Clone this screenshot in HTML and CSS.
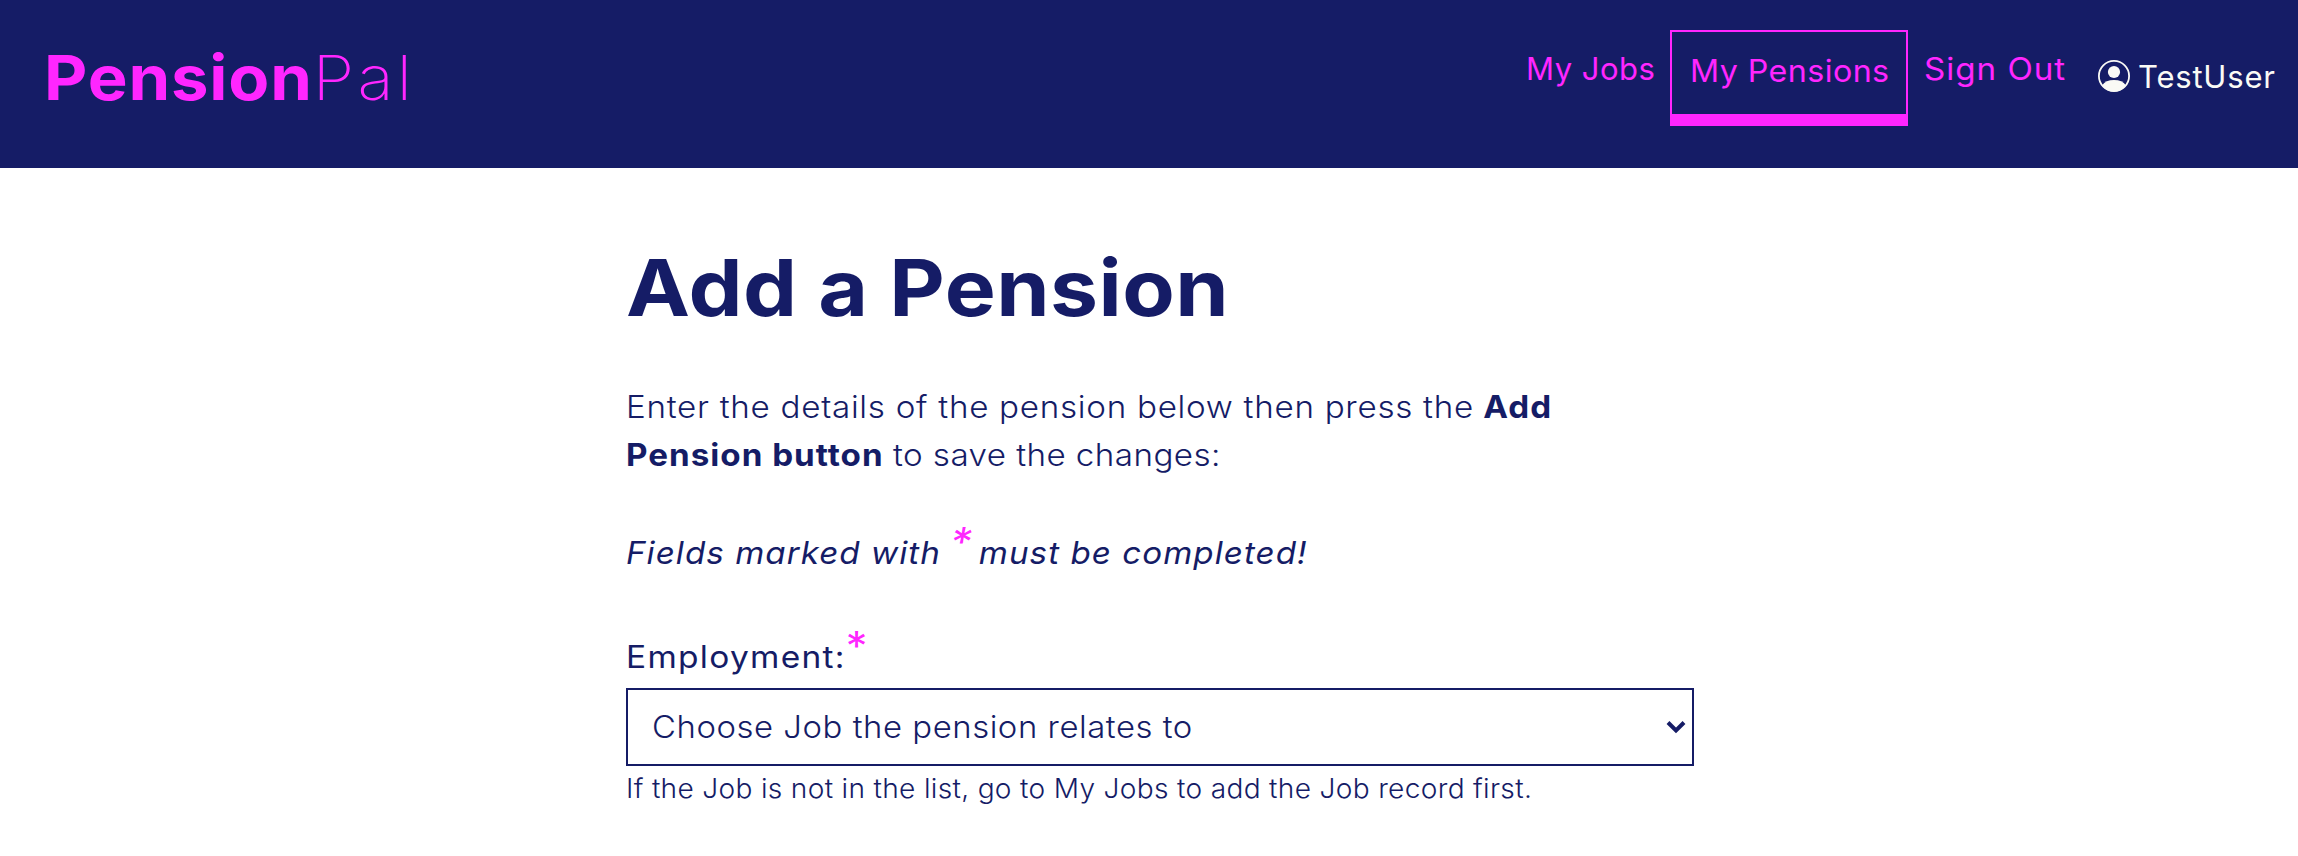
FILE: index.html
```
<!DOCTYPE html>
<html lang="en">
<head>
<meta charset="utf-8">
<title>PensionPal - Add a Pension</title>
<link rel="stylesheet" href="styles.css">
</head>
<body>
<header class="header">
  <div class="logo"><span class="logo-bold">Pension</span><span class="logo-thin">Pal</span></div>
  <nav class="nav">
    <a class="link jobs">My Jobs</a>
    <a class="link active"><span class="active-text">My Pensions</span></a>
    <a class="link signout">Sign Out</a>
    <div class="user">
      <svg class="avatar" viewBox="0 0 32 32" width="32" height="32">
        <defs><clipPath id="disc"><circle cx="16" cy="16" r="15.5"/></clipPath></defs>
        <circle cx="16" cy="16" r="15.1" fill="none" stroke="#fafaf5" stroke-width="1.8"/>
        <circle cx="16" cy="12" r="6.1" fill="#fafaf5"/>
        <path d="M4 25.5C6.5 21.8 10.5 20 16 20s9.500 1.800 12 5.500V32H4z" fill="#fafaf5" clip-path="url(#disc)"/>
      </svg>
      <span class="username">TestUser</span>
    </div>
  </nav>
</header>
<main class="main">
  <h1 class="title">Add a Pension</h1>
  <p class="intro"><span class="light">Enter the details of the pension below then press the</span> <b>Add</b><br><b>Pension button</b> <span class="light2">to save the changes:</span></p>
  <p class="note">Fields marked with <span class="star note-star">*</span> must be completed!</p>
  <div class="label">Employment:<span class="star label-star">*</span></div>
  <div class="select">
    <span class="select-text">Choose Job the pension relates to</span>
    <svg viewBox="0 0 20 14" width="20" height="14"><path d="M2 2.500l8 8 8-8" fill="none" stroke="#151c66" stroke-width="4"/></svg>
  </div>
  <p class="help">If the Job is not in the list, go to My Jobs to add the Job record first.</p>
</main>
</body>
</html>
```
FILE: styles.css
```
* { box-sizing: border-box; }
body { margin: 0; background: #fff; color: #151c66; font-family: Inter, sans-serif; font-size: 31px; height: 856px; overflow: hidden; }
h1, p { margin: 0; }
.header { height: 168px; background: #151c66; color: #ff26ff; display: flex; justify-content: space-between; align-items: flex-start; padding: 0 22px 0 44px; }
.logo, .active-text, .signout, .title, .intro, .note, .label, .select-text, .help { transform-origin: 0 50%; }
.logo { font-size: 62px; line-height: 78px; padding-top: 39px; white-space: nowrap; transform: scaleX(1.08); }
.logo-bold { font-weight: 700; letter-spacing: .8px; }
.logo-thin { font-weight: 200; letter-spacing: 3px; }
.nav { display: flex; align-items: flex-start; padding-top: 30px; line-height: 48px; white-space: nowrap; }
.jobs { margin: 15px 16px 0 0; width: 128px; letter-spacing: .5px; }
.active { width: 238px; height: 96px; border: 2px solid #ff26ff; border-bottom-width: 12px; padding: 15px 0 0 18px; letter-spacing: .4px; }
.active-text { display: block; transform: scaleX(1.04); }
.signout { display: block; margin: 15px 0 0 16px; width: 174px; letter-spacing: .9px; transform: scaleX(1.07); }
.user { display: flex; align-items: flex-start; gap: 8px; padding-top: 23px; color: #fafaf5; }
.avatar { margin-top: 7px; }
.username { width: 138px; letter-spacing: .8px; }
.main { width: 1068px; margin-left: 626px; padding-top: 72px; }
.title { font-size: 78px; line-height: 96px; font-weight: 700; letter-spacing: .4px; white-space: nowrap; transform: scaleX(1.1); }
.intro { margin-top: 47px; line-height: 48px; white-space: nowrap; transform: scaleX(1.07); }
.intro b { font-weight: 700; letter-spacing: .95px; }
.light { font-weight: 300; letter-spacing: .67px; }
.light2 { font-weight: 300; letter-spacing: .4px; }
.note { margin-top: 50px; line-height: 48px; font-style: italic; letter-spacing: .97px; white-space: nowrap; transform: scaleX(1.07); }
.label { margin-top: 56px; line-height: 48px; letter-spacing: 1.2px; transform: scaleX(1.08); }
.star { color: #ff26ff; font-size: 40px; line-height: 0; }
.note-star { letter-spacing: -3px; vertical-align: 8px; margin-left: -1px; }
.label-star { letter-spacing: 0; vertical-align: 8px; }
.select { margin-top: 7px; height: 78px; border: 2px solid #151c66; display: flex; align-items: center; justify-content: space-between; padding: 0 6px 0 24px; font-weight: 300; letter-spacing: .52px; }
.select-text { padding-bottom: 2px; transform: scaleX(1.06); }
.help { margin-top: 5px; font-size: 27px; line-height: 36px; font-weight: 300; letter-spacing: .31px; white-space: nowrap; transform: scaleX(1.04); }
```
